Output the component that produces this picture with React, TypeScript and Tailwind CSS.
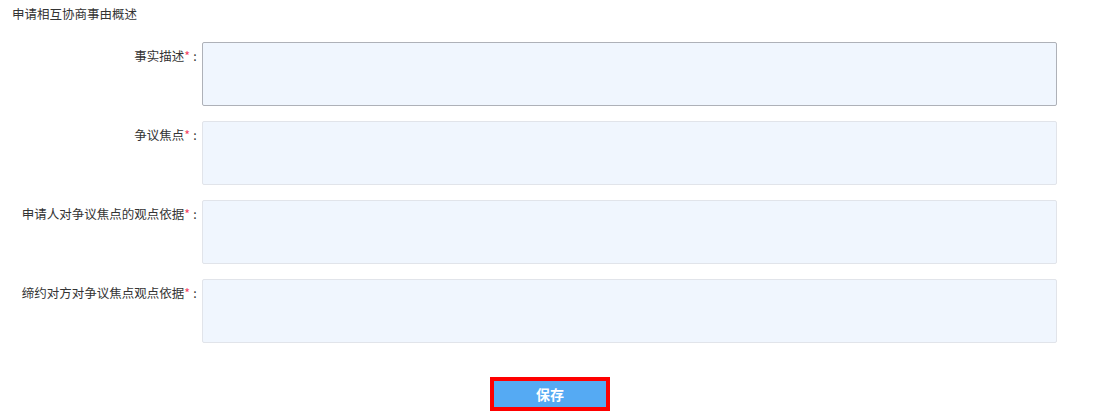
const fields = [
  { label: "事实描述", active: true },
  { label: "争议焦点" },
  { label: "申请人对争议焦点的观点依据" },
  { label: "缔约对方对争议焦点观点依据" },
];

export default function App() {
  return (
    <div
      className="w-[1102px] h-[412px] bg-white text-[12.5px] text-[#333] overflow-hidden"
      style={{ fontFamily: '"Microsoft YaHei", "Noto Sans CJK SC", sans-serif' }}
    >
      <div className="pl-[12px] pt-[6px] leading-[16px]">申请相互协商事由概述</div>
      <div className="mt-[20px] flex flex-col gap-[15px]">
        {fields.map((f) => (
          <div key={f.label} className="flex">
            <label className="w-[202px] shrink-0 pr-[2px] pt-[6px] text-right leading-[16px]">
              {f.label}
              <span className="text-[#f4435f]">*</span>
              <span className="inline-block w-[10px] text-center">:</span>
            </label>
            <textarea
              className={
                "w-[855px] h-[64px] rounded-[2px] bg-[#f0f6fe] resize-none outline-none border " +
                (f.active ? "border-[#aeb1b8]" : "border-[#e1e4ea]")
              }
            />
          </div>
        ))}
      </div>
      <div className="mt-[34px] flex justify-center">
        <button className="w-[120px] h-[34px] border-[4px] border-[#ff0000] bg-[#55aaf3] text-white text-[14px] font-semibold leading-none ml-[-2px]">
          保存
        </button>
      </div>
    </div>
  );
}
